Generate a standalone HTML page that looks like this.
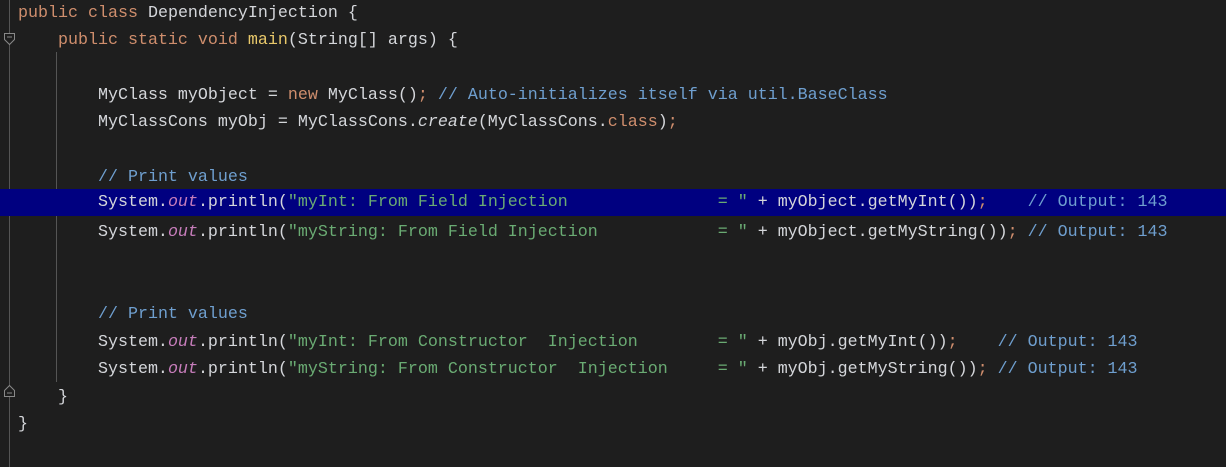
<!DOCTYPE html><html><head><style>
body{margin:0;width:1226px;height:467px;background:#1e1e1e;overflow:hidden;position:relative;font-family:"Liberation Mono",monospace;}
.l{position:absolute;left:0;width:1226px;height:27px;white-space:pre;font-size:16.67px;line-height:27px;color:#d4d6da;padding-left:18px;box-sizing:border-box}
.k{color:#cf8e6d}.c{color:#6f9fcf}.s{color:#6aab73}.o{color:#c77dbb;font-style:italic}.m{color:#e8c86a}
.hl{background:#000080}
</style></head><body>
<div style="position:absolute;left:9px;top:0;width:1px;height:467px;background:#555"></div>
<div style="position:absolute;left:56px;top:52px;width:1px;height:330px;background:#555"></div>
<div class="l" style="top:0px"><span class="k">public class </span>DependencyInjection {</div>
<div class="l" style="top:27px">    <span class="k">public static void </span><span class="m">main</span>(String[] args) {</div>
<div class="l" style="top:82px">        MyClass myObject = <span class="k">new </span>MyClass()<span class="k">;</span> <span class="c">// Auto-initializes itself via util.BaseClass</span></div>
<div class="l" style="top:109px">        MyClassCons myObj = MyClassCons.<i>create</i>(MyClassCons.<span class="k">class</span>)<span class="k">;</span></div>
<div class="l" style="top:164px">        <span class="c">// Print values</span></div>
<div class="l hl" style="top:189px;line-height:31px;height:27px;"><div style="margin-top:-2px">        System.<span class="o">out</span>.println(<span class="s">"myInt: From Field Injection               = "</span> + myObject.getMyInt())<span class="k">;</span>    <span class="c">// Output: 143</span></div></div>
<div class="l" style="top:219px">        System.<span class="o">out</span>.println(<span class="s">"myString: From Field Injection            = "</span> + myObject.getMyString())<span class="k">;</span> <span class="c">// Output: 143</span></div>
<div class="l" style="top:301px">        <span class="c">// Print values</span></div>
<div class="l" style="top:329px">        System.<span class="o">out</span>.println(<span class="s">"myInt: From Constructor  Injection        = "</span> + myObj.getMyInt())<span class="k">;</span>    <span class="c">// Output: 143</span></div>
<div class="l" style="top:356px">        System.<span class="o">out</span>.println(<span class="s">"myString: From Constructor  Injection     = "</span> + myObj.getMyString())<span class="k">;</span> <span class="c">// Output: 143</span></div>
<div class="l" style="top:384px">    }</div>
<div class="l" style="top:411px">}</div>
<svg style="position:absolute;left:3px;top:32px" width="13" height="14"><path d="M1.5 1.5h10v6l-5 5-5-5z" fill="#1e1e1e" stroke="#888"/><path d="M4 5h5" stroke="#888"/></svg>
<svg style="position:absolute;left:3px;top:384px" width="13" height="14"><path d="M1.5 12.5h10v-6l-5-5-5 5z" fill="#1e1e1e" stroke="#888"/><path d="M4 9h5" stroke="#888"/></svg>
</body></html>
